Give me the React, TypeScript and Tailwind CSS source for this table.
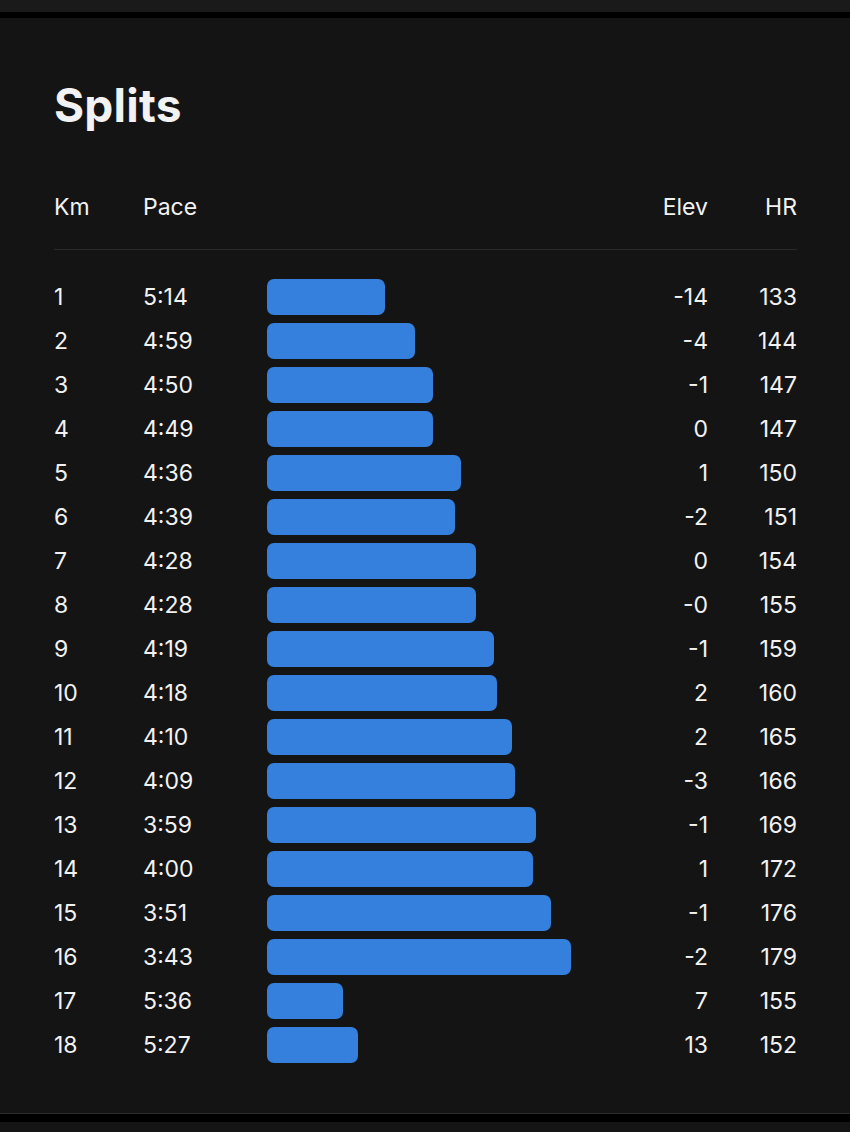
const splits = [
  { km: 1, pace: "5:14", bar: 118, elev: "-14", hr: 133 },
  { km: 2, pace: "4:59", bar: 148, elev: "-4", hr: 144 },
  { km: 3, pace: "4:50", bar: 166, elev: "-1", hr: 147 },
  { km: 4, pace: "4:49", bar: 166, elev: "0", hr: 147 },
  { km: 5, pace: "4:36", bar: 194, elev: "1", hr: 150 },
  { km: 6, pace: "4:39", bar: 188, elev: "-2", hr: 151 },
  { km: 7, pace: "4:28", bar: 209, elev: "0", hr: 154 },
  { km: 8, pace: "4:28", bar: 209, elev: "-0", hr: 155 },
  { km: 9, pace: "4:19", bar: 227, elev: "-1", hr: 159 },
  { km: 10, pace: "4:18", bar: 230, elev: "2", hr: 160 },
  { km: 11, pace: "4:10", bar: 245, elev: "2", hr: 165 },
  { km: 12, pace: "4:09", bar: 248, elev: "-3", hr: 166 },
  { km: 13, pace: "3:59", bar: 269, elev: "-1", hr: 169 },
  { km: 14, pace: "4:00", bar: 266, elev: "1", hr: 172 },
  { km: 15, pace: "3:51", bar: 284, elev: "-1", hr: 176 },
  { km: 16, pace: "3:43", bar: 304, elev: "-2", hr: 179 },
  { km: 17, pace: "5:36", bar: 76, elev: "7", hr: 155 },
  { km: 18, pace: "5:27", bar: 91, elev: "13", hr: 152 },
];

export default function App() {
  return (
    <div className="min-h-screen bg-[#151515] font-['Inter','Liberation_Sans',sans-serif] text-[#f2f2f2]">
      <div className="h-[12px] bg-[#1a1a1a]" />
      <div className="h-[6px] bg-black" />

      <main className="h-[1095px] bg-[#141414] px-[54px] pt-[61px] pr-[53px]">
        <h1 className="text-[46px] font-bold leading-[52px] tracking-[0.005em]">Splits</h1>

        <div className="mt-[61px] grid h-[30px] grid-cols-[89px_124px_1fr_89px] items-center text-[23px] leading-[30px]">
          <span>Km</span>
          <span>Pace</span>
          <span className="text-right">Elev</span>
          <span className="text-right">HR</span>
        </div>

        <div className="mt-[27px] h-px bg-[#2a2a2a]" />

        <div className="mt-[25px]">
          {splits.map((s) => (
            <div
              key={s.km}
              className="grid h-[44px] grid-cols-[89px_124px_1fr_89px] items-center text-[23px] leading-[30px]"
            >
              <span>{s.km}</span>
              <span>{s.pace}</span>
              <div className="flex items-center justify-between">
                <div className="h-[36px] rounded-[7px] bg-[#3580dc]" style={{ width: s.bar }} />
                <span className="text-right">{s.elev}</span>
              </div>
              <span className="text-right">{s.hr}</span>
            </div>
          ))}
        </div>
      </main>

      <div className="h-px bg-[#2c2c2c]" />
      <div className="h-[8px] bg-black" />
      <div className="h-[10px] bg-[#151515]" />
    </div>
  );
}
